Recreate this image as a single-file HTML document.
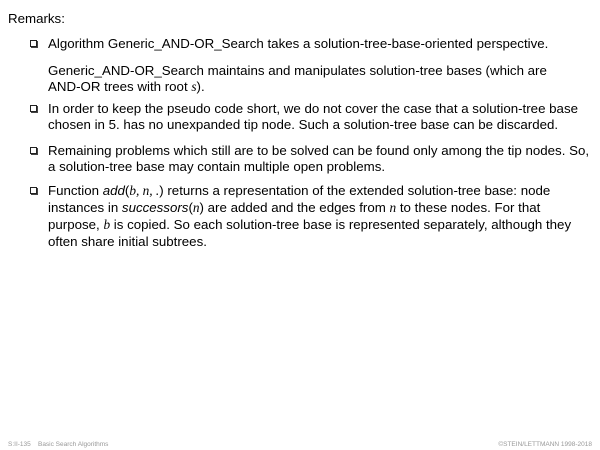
<!DOCTYPE html>
<html><head><meta charset="utf-8"><style>
body{margin:0;width:600px;height:450px;background:#fff;font-family:"Liberation Sans",sans-serif;color:#000;position:relative;overflow:hidden}
.t{position:absolute;font-size:13.3px;white-space:nowrap;line-height:16px}
.b{position:absolute;width:5px;height:5px;border:1px solid #222;box-shadow:1px 1px 0 #444;}
.m{font-family:"Liberation Serif",serif;font-style:italic}
.f{position:absolute;top:441px;font-size:6.5px;color:#999;white-space:nowrap}
</style></head><body>
<div class="t" style="left:8px;top:11px">Remarks:</div>
<div class="b" style="left:30px;top:40px"></div>
<div class="t" style="left:48px;top:36px">Algorithm Generic_AND-OR_Search takes a solution-tree-base-oriented perspective.</div>
<div class="t" style="left:48px;top:63px">Generic_AND-OR_Search maintains and manipulates solution-tree bases (which are</div>
<div class="t" style="left:48px;top:79px">AND-OR trees with root <span class="m">s</span>).</div>
<div class="b" style="left:30px;top:105px"></div>
<div class="t" style="left:48px;top:101px">In order to keep the pseudo code short, we do not cover the case that a solution-tree base</div>
<div class="t" style="left:48px;top:117px">chosen in 5. has no unexpanded tip node. Such a solution-tree base can be discarded.</div>
<div class="b" style="left:30px;top:147px"></div>
<div class="t" style="left:48px;top:143px">Remaining problems which still are to be solved can be found only among the tip nodes. So,</div>
<div class="t" style="left:48px;top:159px">a solution-tree base may contain multiple open problems.</div>
<div class="b" style="left:30px;top:187px"></div>
<div class="t" style="left:48px;top:183px">Function <i>add</i>(<span class="m">b, n, .</span>) returns a representation of the extended solution-tree base: node</div>
<div class="t" style="left:48px;top:200px">instances in <i>successors</i>(<span class="m">n</span>) are added and the edges from <span class="m">n</span> to these nodes. For that</div>
<div class="t" style="left:48px;top:217px">purpose, <span class="m">b</span> is copied. So each solution-tree base is represented separately, although they</div>
<div class="t" style="left:48px;top:234px">often share initial subtrees.</div>
<div class="f" style="left:8px">S:II-135 &nbsp;&nbsp; Basic Search Algorithms</div>
<div class="f" style="right:8px">©STEIN/LETTMANN 1998-2018</div>
</body></html>
